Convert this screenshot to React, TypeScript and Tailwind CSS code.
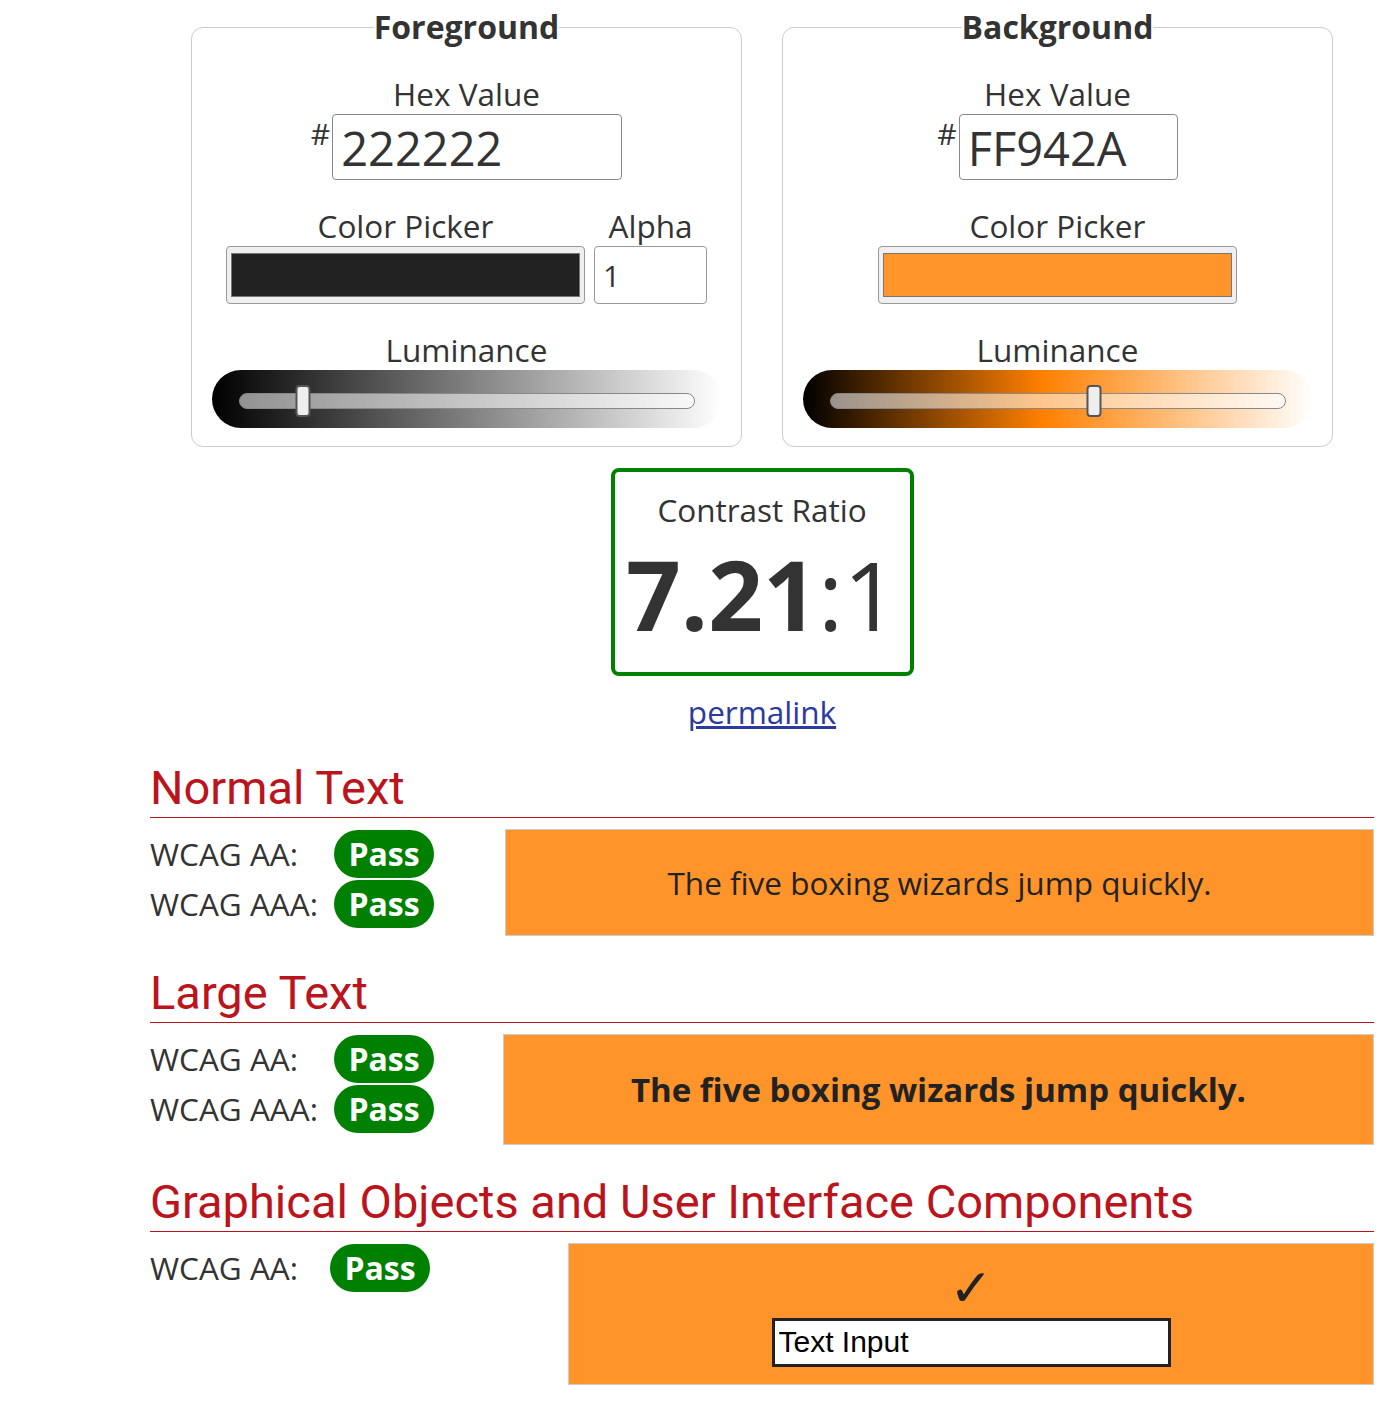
import React from "react";

const sans = "font-['Open_Sans','Liberation_Sans',sans-serif]";
const head = "font-['Roboto','Liberation_Sans',sans-serif]";

function Slider({ gradient, pos }: { gradient: string; pos: number }) {
  return (
    <div
      className="mx-auto flex h-[58px] w-[510px] items-center rounded-full px-[27px]"
      style={{ background: gradient }}
    >
      <div className="relative mt-[3px] h-[16px] w-full rounded-full border border-[#888] bg-white/55">
        <div
          className="absolute top-[-9px] h-[32px] w-[15px] -translate-x-1/2 rounded-[4px] border-2 border-[#555] bg-[#eee]"
          style={{ left: `${pos}%` }}
        />
      </div>
    </div>
  );
}

function Picker({ color }: { color: string }) {
  return (
    <div className="flex h-[58px] w-[359px] items-center rounded-[4px] border border-[#999] bg-[#efefef] px-[4px]">
      <div className="h-[44px] w-full border border-[#777]" style={{ background: color }} />
    </div>
  );
}

function Panel({
  title,
  hex,
  hexWidth,
  color,
  alpha,
  gradient,
  pos,
}: {
  title: string;
  hex: string;
  hexWidth: string;
  color: string;
  alpha?: boolean;
  gradient: string;
  pos: number;
}) {
  return (
    <fieldset className="w-[551px] rounded-xl border border-[#ccc] pb-[18px]">
      <legend className="mx-auto px-0 text-[32px] font-bold leading-[38px] text-[#333]">{title}</legend>
      <div className="mt-[28px] text-center text-[31.5px] leading-[40px] text-[#333]">Hex Value</div>
      <div className="flex justify-center">
        <span className="mr-[2px] text-[30px] leading-[40px] text-[#333]">#</span>
        <input
          readOnly
          value={hex}
          className={`${hexWidth} h-[66px] rounded-[4px] border border-[#888] px-[8px] pt-[2px] text-[47px] text-[#333] outline-none`}
        />
      </div>
      <div className="mt-[26px] flex justify-center gap-[9px]">
        <div className="flex flex-col items-center">
          <div className="text-[31.5px] leading-[40px] text-[#333]">Color Picker</div>
          <Picker color={color} />
        </div>
        {alpha && (
          <div className="flex flex-col items-center">
            <div className="text-[31.5px] leading-[40px] text-[#333]">Alpha</div>
            <input
              readOnly
              value="1"
              className="h-[58px] w-[113px] rounded-[4px] border border-[#999] px-[8px] text-[30px] text-[#333] outline-none"
            />
          </div>
        )}
      </div>
      <div className="mt-[26px] text-center text-[31.5px] leading-[40px] text-[#333]">Luminance</div>
      <Slider gradient={gradient} pos={pos} />
    </fieldset>
  );
}

function Pass() {
  return (
    <span className="flex h-[48px] w-[100px] items-center justify-center rounded-full bg-[#008000] text-[32px] font-bold text-white">
      Pass
    </span>
  );
}

function Row({ label, w = "w-[184px]" }: { label: string; w?: string }) {
  return (
    <div className="flex h-[50px] items-center">
      <span className={`${w} text-[31.5px] text-[#333]`}>{label}</span>
      <Pass />
    </div>
  );
}

function Heading({ children }: { children: React.ReactNode }) {
  return (
    <h2 className={`${head} h-[60px] border-b border-[#b8141c] text-[47px] leading-[60px] text-[#bb141c]`}>
      {children}
    </h2>
  );
}

export default function App() {
  return (
    <div className={`${sans} min-h-[1419px] bg-white pl-[150px] pr-[12px]`}>
      <div className="w-[1224px]">
        <div className="flex justify-center gap-[40px] pt-[8px]">
          <Panel
            title="Foreground"
            hex="222222"
            hexWidth="w-[290px]"
            color="#222222"
            alpha
            gradient="linear-gradient(to right, #000, #fff)"
            pos={14}
          />
          <Panel
            title="Background"
            hex="FF942A"
            hexWidth="w-[219px]"
            color="#FF942A"
            gradient="linear-gradient(to right, #000, #ff8000 47%, #fff)"
            pos={58}
          />
        </div>

        <div className="mt-[21px] flex flex-col items-center">
          <div className="flex h-[208px] w-[303px] flex-col items-center rounded-[8px] border-4 border-[#008000] text-[#333]">
            <div className="mt-[18px] text-[31.5px] leading-[40px]">Contrast Ratio</div>
            <div className="mt-[9px] text-[96px] leading-[110px]">
              <span className="font-bold">7.21</span>
              <span>:1</span>
            </div>
          </div>
          <a href="#" className="mt-[14px] text-[31.5px] leading-[44px] text-[#2a3a9f] underline">
            permalink
          </a>
        </div>

        <div className="mt-[24px]">
          <Heading>Normal Text</Heading>
          <div className="mt-[11px] flex">
            <div className="w-[355px]">
              <Row label="WCAG AA:" />
              <Row label="WCAG AAA:" />
            </div>
            <div className="flex h-[107px] flex-1 items-center justify-center border border-[#ccc] bg-[#FF942A] text-[31.5px] text-[#222]">
              The five boxing wizards jump quickly.
            </div>
          </div>
        </div>

        <div className="mt-[27px]">
          <Heading>Large Text</Heading>
          <div className="mt-[11px] flex">
            <div className="w-[353px]">
              <Row label="WCAG AA:" />
              <Row label="WCAG AAA:" />
            </div>
            <div className="flex h-[111px] flex-1 items-center justify-center border border-[#ccc] bg-[#FF942A] text-[33px] font-bold text-[#222]">
              The five boxing wizards jump quickly.
            </div>
          </div>
        </div>

        <div className="mt-[27px]">
          <Heading>Graphical Objects and User Interface Components</Heading>
          <div className="mt-[11px] flex">
            <div className="w-[418px]">
              <Row label="WCAG AA:" w="w-[180px]" />
            </div>
            <div className="flex h-[142px] flex-1 flex-col items-center justify-center border border-[#ccc] bg-[#FF942A]">
              <div className="font-['DejaVu_Sans',sans-serif] text-[52px] font-bold leading-[52px] text-[#222]">✓</div>
              <input
                readOnly
                value="Text Input"
                className="mt-[4px] h-[49px] w-[399px] border-[3px] border-[#222] bg-white px-[4px] font-['Liberation_Sans',Arial,sans-serif] text-[30px] text-black outline-none"
              />
            </div>
          </div>
        </div>
      </div>
    </div>
  );
}
